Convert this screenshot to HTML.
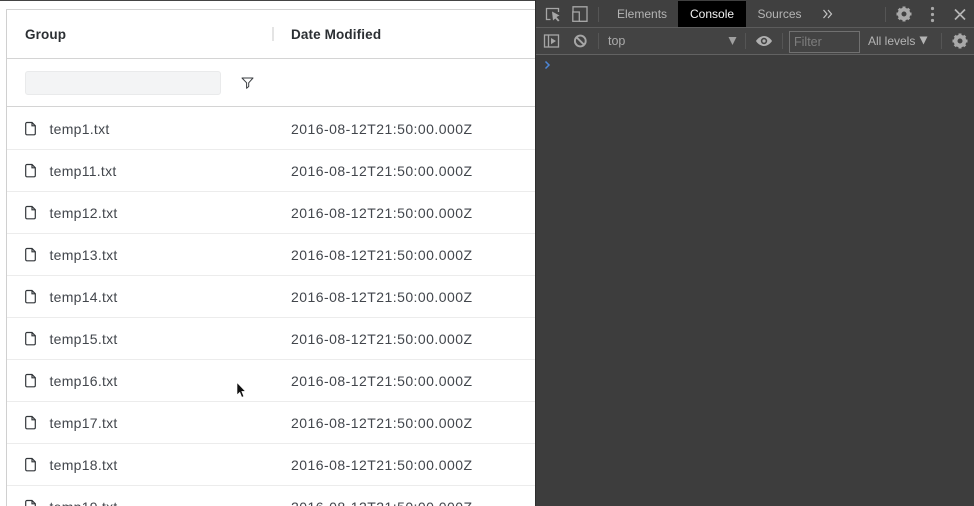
<!DOCTYPE html>
<html>
<head>
<meta charset="utf-8">
<style>
html,body{margin:0;padding:0;background:#fff;width:974px;height:506px;overflow:hidden}
body{font-family:"Liberation Sans",sans-serif}
#w{position:relative;width:974px;height:506px;overflow:hidden;background:#fff}
.a{position:absolute}
.hl{position:absolute;height:1px}
.n{position:absolute;left:49.5px;font-size:14px;letter-spacing:.27px;color:#42464c;line-height:16px;white-space:nowrap}
.d{position:absolute;left:291px;font-size:14px;letter-spacing:.46px;color:#42464c;line-height:16px;white-space:nowrap}
.h{position:absolute;top:27px;font-size:13.5px;font-weight:bold;letter-spacing:.13px;color:#2b2f33;line-height:16px;white-space:nowrap}
.ic{position:absolute;left:24px}
.t{position:absolute;font-size:12px;color:#b4b4b4;line-height:16px;white-space:nowrap}
</style>
</head>
<body>
<div id="w">
<div class="a" style="left:0;top:0;width:536px;height:1px;background:#444"></div>
<div class="a" style="left:6px;top:9px;width:1px;height:497px;background:#d0d0d0"></div>
<div class="hl" style="left:6px;top:9px;width:530px;background:#d4d4d4"></div>
<div class="hl" style="left:7px;top:58px;width:529px;background:#d4d4d4"></div>
<div class="hl" style="left:7px;top:106px;width:529px;background:#d4d4d4"></div>
<div class="h" style="left:25px">Group</div>
<div class="a" style="left:272px;top:27px;width:2px;height:14px;background:#e4e4e4"></div>
<div class="h" style="left:291px">Date Modified</div>
<div class="a" style="left:25px;top:71px;width:194px;height:22px;background:#f3f4f5;border:1px solid #e9eaeb;border-radius:3px"></div>
<svg class="a" style="left:241px;top:76px" width="13" height="14" viewBox="0 0 13 14"><path d="M1 2H12L7.700 6.800V10.500L5.600 12.300V6.800Z" fill="none" stroke="#3a3d41" stroke-width="1" stroke-linejoin="round"/></svg>

<div class="hl" style="left:7px;top:149px;width:529px;background:#ececec"></div>
<div class="hl" style="left:7px;top:191px;width:529px;background:#ececec"></div>
<div class="hl" style="left:7px;top:233px;width:529px;background:#ececec"></div>
<div class="hl" style="left:7px;top:275px;width:529px;background:#ececec"></div>
<div class="hl" style="left:7px;top:317px;width:529px;background:#ececec"></div>
<div class="hl" style="left:7px;top:359px;width:529px;background:#ececec"></div>
<div class="hl" style="left:7px;top:401px;width:529px;background:#ececec"></div>
<div class="hl" style="left:7px;top:443px;width:529px;background:#ececec"></div>
<div class="hl" style="left:7px;top:485px;width:529px;background:#ececec"></div>

<svg class="ic" style="top:121px" width="13" height="15" viewBox="0 0 13 15"><path d="M3 1.500H8L11.300 4.800V12.500A1.300 1.300 0 0 1 10 13.800H3A1.300 1.300 0 0 1 1.700 12.500V2.800A1.300 1.300 0 0 1 3 1.500ZM8 1.500V4.800H11.300" fill="none" stroke="#33373b" stroke-width="1.200"/></svg>
<svg class="ic" style="top:163px" width="13" height="15" viewBox="0 0 13 15"><path d="M3 1.500H8L11.300 4.800V12.500A1.300 1.300 0 0 1 10 13.800H3A1.300 1.300 0 0 1 1.700 12.500V2.800A1.300 1.300 0 0 1 3 1.500ZM8 1.500V4.800H11.300" fill="none" stroke="#33373b" stroke-width="1.200"/></svg>
<svg class="ic" style="top:205px" width="13" height="15" viewBox="0 0 13 15"><path d="M3 1.500H8L11.300 4.800V12.500A1.300 1.300 0 0 1 10 13.800H3A1.300 1.300 0 0 1 1.700 12.500V2.800A1.300 1.300 0 0 1 3 1.500ZM8 1.500V4.800H11.300" fill="none" stroke="#33373b" stroke-width="1.200"/></svg>
<svg class="ic" style="top:247px" width="13" height="15" viewBox="0 0 13 15"><path d="M3 1.500H8L11.300 4.800V12.500A1.300 1.300 0 0 1 10 13.800H3A1.300 1.300 0 0 1 1.700 12.500V2.800A1.300 1.300 0 0 1 3 1.500ZM8 1.500V4.800H11.300" fill="none" stroke="#33373b" stroke-width="1.200"/></svg>
<svg class="ic" style="top:289px" width="13" height="15" viewBox="0 0 13 15"><path d="M3 1.500H8L11.300 4.800V12.500A1.300 1.300 0 0 1 10 13.800H3A1.300 1.300 0 0 1 1.700 12.500V2.800A1.300 1.300 0 0 1 3 1.500ZM8 1.500V4.800H11.300" fill="none" stroke="#33373b" stroke-width="1.200"/></svg>
<svg class="ic" style="top:331px" width="13" height="15" viewBox="0 0 13 15"><path d="M3 1.500H8L11.300 4.800V12.500A1.300 1.300 0 0 1 10 13.800H3A1.300 1.300 0 0 1 1.700 12.500V2.800A1.300 1.300 0 0 1 3 1.500ZM8 1.500V4.800H11.300" fill="none" stroke="#33373b" stroke-width="1.200"/></svg>
<svg class="ic" style="top:373px" width="13" height="15" viewBox="0 0 13 15"><path d="M3 1.500H8L11.300 4.800V12.500A1.300 1.300 0 0 1 10 13.800H3A1.300 1.300 0 0 1 1.700 12.500V2.800A1.300 1.300 0 0 1 3 1.500ZM8 1.500V4.800H11.300" fill="none" stroke="#33373b" stroke-width="1.200"/></svg>
<svg class="ic" style="top:415px" width="13" height="15" viewBox="0 0 13 15"><path d="M3 1.500H8L11.300 4.800V12.500A1.300 1.300 0 0 1 10 13.800H3A1.300 1.300 0 0 1 1.700 12.500V2.800A1.300 1.300 0 0 1 3 1.500ZM8 1.500V4.800H11.300" fill="none" stroke="#33373b" stroke-width="1.200"/></svg>
<svg class="ic" style="top:457px" width="13" height="15" viewBox="0 0 13 15"><path d="M3 1.500H8L11.300 4.800V12.500A1.300 1.300 0 0 1 10 13.800H3A1.300 1.300 0 0 1 1.700 12.500V2.800A1.300 1.300 0 0 1 3 1.500ZM8 1.500V4.800H11.300" fill="none" stroke="#33373b" stroke-width="1.200"/></svg>
<svg class="ic" style="top:499px" width="13" height="15" viewBox="0 0 13 15"><path d="M3 1.500H8L11.300 4.800V12.500A1.300 1.300 0 0 1 10 13.800H3A1.300 1.300 0 0 1 1.700 12.500V2.800A1.300 1.300 0 0 1 3 1.500ZM8 1.500V4.800H11.300" fill="none" stroke="#33373b" stroke-width="1.200"/></svg>

<div class="n" style="top:121px">temp1.txt</div><div class="d" style="top:121px">2016-08-12T21:50:00.000Z</div>
<div class="n" style="top:163px">temp11.txt</div><div class="d" style="top:163px">2016-08-12T21:50:00.000Z</div>
<div class="n" style="top:205px">temp12.txt</div><div class="d" style="top:205px">2016-08-12T21:50:00.000Z</div>
<div class="n" style="top:247px">temp13.txt</div><div class="d" style="top:247px">2016-08-12T21:50:00.000Z</div>
<div class="n" style="top:289px">temp14.txt</div><div class="d" style="top:289px">2016-08-12T21:50:00.000Z</div>
<div class="n" style="top:331px">temp15.txt</div><div class="d" style="top:331px">2016-08-12T21:50:00.000Z</div>
<div class="n" style="top:373px">temp16.txt</div><div class="d" style="top:373px">2016-08-12T21:50:00.000Z</div>
<div class="n" style="top:415px">temp17.txt</div><div class="d" style="top:415px">2016-08-12T21:50:00.000Z</div>
<div class="n" style="top:457px">temp18.txt</div><div class="d" style="top:457px">2016-08-12T21:50:00.000Z</div>
<div class="n" style="top:499px">temp19.txt</div><div class="d" style="top:499px">2016-08-12T21:50:00.000Z</div>

<svg class="a" style="left:235px;top:381px" width="13" height="18" viewBox="0 0 13 18"><path d="M2 1.500V14L4.800 11.300L6.800 16.300L8.800 15.400L6.800 10.400H10.500Z" fill="#111" stroke="#fff" stroke-width=".6"/></svg>

<!-- DevTools -->
<div class="a" style="left:535px;top:0;width:439px;height:506px;background:#3d3d3d"></div>
<div class="a" style="left:535px;top:0;width:1px;height:506px;background:#2e2e2e"></div>
<div class="a" style="left:536px;top:0;width:438px;height:27px;background:#404040"></div>
<div class="a" style="left:536px;top:28px;width:438px;height:26px;background:#434343"></div>
<div class="hl" style="left:536px;top:27px;width:438px;background:#5c5c5c"></div>
<div class="hl" style="left:536px;top:54px;width:438px;background:#626262"></div>
<div class="a" style="left:678px;top:1px;width:68px;height:26px;background:#000"></div>

<svg class="a" style="left:536px;top:0" width="70" height="56" viewBox="0 0 70 56" fill="none" stroke="#a6a6a6" stroke-width="1.300">
<path d="M14.500 19.500H10.500V8.500H22.500V12"/>
<path d="M16 11.500L23.500 15.500L20.500 17L23.500 20.500L22 21.500L19.300 18.500L17 20.500Z" fill="#a6a6a6" stroke="none"/>
<path d="M37 12V6.800H51V21.300H43"/>
<rect x="36.800" y="12" width="6.500" height="9.300"/>
<rect x="8.500" y="35" width="14" height="12"/>
<path d="M12.500 35V47"/>
<path d="M15 38L20 41L15 44.200Z" fill="#a6a6a6" stroke="none"/>
<circle cx="44.300" cy="41" r="5.400" stroke-width="1.900"/>
<path d="M40.600 37.300L48 44.700" stroke-width="1.900"/>
</svg>

<div class="a" style="left:598px;top:7px;width:1px;height:15px;background:#555"></div>
<div class="a" style="left:598px;top:33px;width:1px;height:16px;background:#555"></div>
<div class="a" style="left:745px;top:33px;width:1px;height:16px;background:#555"></div>
<div class="a" style="left:782px;top:33px;width:1px;height:16px;background:#555"></div>
<div class="a" style="left:885px;top:7px;width:1px;height:15px;background:#555"></div>
<div class="a" style="left:941px;top:33px;width:1px;height:16px;background:#555"></div>

<div class="t" style="left:617px;top:6px">Elements</div>
<div class="t" style="left:690px;top:6px;color:#f2f2f2">Console</div>
<div class="t" style="left:757.500px;top:6px">Sources</div>
<div class="t" style="left:608px;top:33px;color:#aaa;font-size:12.500px">top</div>
<div class="t" style="left:794px;top:34px;color:#7e7e7e;font-size:12.500px">Filter</div>
<div class="t" style="left:868px;top:33px;color:#b4b4b4">All levels</div>
<div class="a" style="left:789px;top:31px;width:69px;height:20px;border:1px solid #707070"></div>

<svg class="a" style="left:600px;top:0" width="374" height="70" viewBox="0 0 374 70">
<path d="M128.500 37H136.500L132.500 45Z" fill="#a0a0a0"/>
<path d="M319.500 36.500H327.500L323.500 44.500Z" fill="#b4b4b4"/>
<path d="M164 36C167 36 170.500 38.300 172 41C170.500 43.700 167 46 164 46C161 46 157.500 43.700 156 41C157.500 38.300 161 36 164 36Z" fill="#b0b0b0"/>
<circle cx="164" cy="41" r="3.200" fill="#434343"/>
<circle cx="164" cy="41" r="1.600" fill="#b0b0b0"/>
<path d="M223.500 10L227 14L223.500 18M228 10L231.500 14L228 18" fill="none" stroke="#c4c4c4" stroke-width="1.200"/>
<circle cx="332.500" cy="8.500" r="1.600" fill="#a8a8a8"/>
<circle cx="332.500" cy="14.500" r="1.600" fill="#a8a8a8"/>
<circle cx="332.500" cy="20.500" r="1.600" fill="#a8a8a8"/>
<path d="M355 9.500L365 19.500M365 9.500L355 19.500" stroke="#b4b4b4" stroke-width="1.700"/>
<g fill="#a8a8a8">
<circle cx="304" cy="14" r="4.400" fill="none" stroke="#a8a8a8" stroke-width="3.800"/>
<path d="M302.500 6.500H305.500V9.500H302.500ZM302.500 18.500H305.500V21.500H302.500ZM296.500 12.500H299.500V15.500H296.500ZM308.500 12.500H311.500V15.500H308.500Z"/>
<path d="M297.700 9.800L299.800 7.700L301.500 9.500L299.500 11.500ZM308.200 7.700L310.300 9.800L308.500 11.500L306.500 9.500ZM297.700 18.200L299.500 16.500L301.500 18.500L299.800 20.300ZM308.500 16.500L310.300 18.200L308.200 20.300L306.500 18.500Z"/>
<circle cx="360" cy="41" r="4.400" fill="none" stroke="#a8a8a8" stroke-width="3.800"/>
<path d="M358.500 33.500H361.500V36.500H358.500ZM358.500 45.500H361.500V48.500H358.500ZM352.500 39.500H355.500V42.500H352.500ZM364.500 39.500H367.500V42.500H364.500Z"/>
<path d="M353.700 36.800L355.800 34.700L357.500 36.500L355.500 38.500ZM364.200 34.700L366.300 36.800L364.500 38.500L362.500 36.500ZM353.700 45.200L355.500 43.500L357.500 45.500L355.800 47.300ZM364.500 43.500L366.300 45.200L364.200 47.300L362.500 45.500Z"/>
</g>
</svg>

<svg class="a" style="left:544px;top:60px" width="8" height="10" viewBox="0 0 8 10"><path d="M1.500 1.500L5 5L1.500 8.500" fill="none" stroke="#4d86d6" stroke-width="1.500"/></svg>
</div>
</body>
</html>
